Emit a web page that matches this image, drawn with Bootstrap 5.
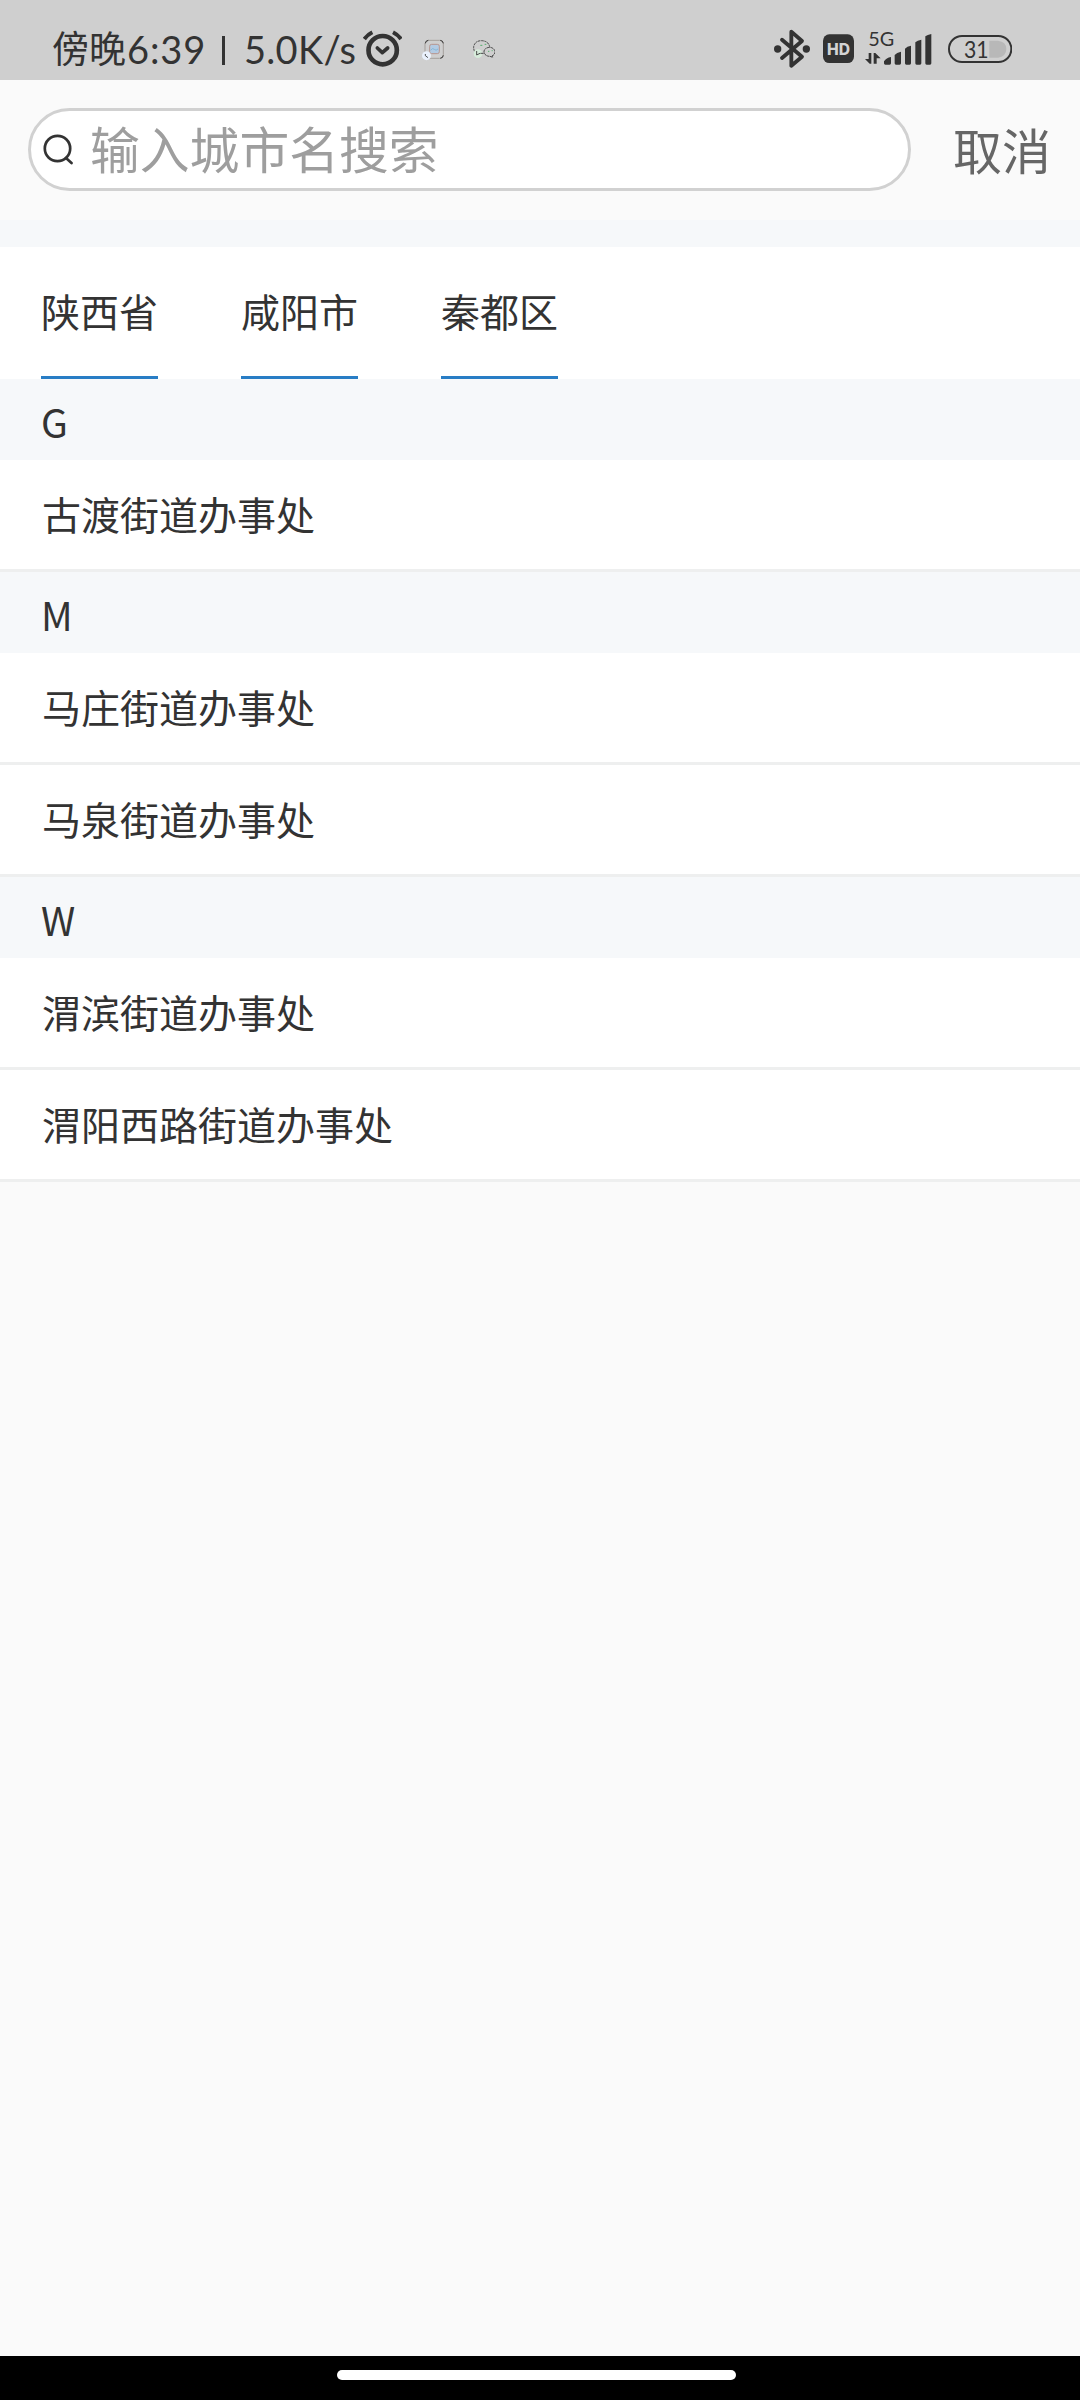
<!DOCTYPE html>
<html lang="zh-CN">
<head>
<meta charset="utf-8">
<meta name="viewport" content="width=device-width, initial-scale=1">
<title>选择城市</title>
<link rel="stylesheet" href="https://cdn.jsdelivr.net/npm/bootstrap@5.3.0/dist/css/bootstrap.min.css">
<style>
  body { font-family: Lato, "Noto Sans CJK SC", sans-serif; color: #333; background: #fafafa; font-size: 39px; line-height: 1; }
  .screen { height: 2400px; }
  .status { height: 80px; background: #cfcfcf; padding: 0 68px 0 52px; }
  .status svg { height: 70px; display: block; flex: none; margin-top: 10px; }
  .clock { font-size: 37px; width: 311px; height: 80px; line-height: 98px; white-space: nowrap; }
  .clock .cn { width: 75px; }
  .clock .tm { width: 79px; font-size: 38px; letter-spacing: .9px; }
  .clock .bar { width: 3px; height: 29px; background: #333; margin: 36px 19px 0 16px; }
  .clock .rate { font-size: 38px; letter-spacing: .3px; }
  .searchbar { height: 140px; padding: 28px 29px 29px 28px; }
  .search-box { width: 883px; height: 83px; border: 3px solid #d1d1d1; color: #9e9e9e; font-size: 49.8px; padding-left: 12px; }
  .search-box svg { margin-right: 17px; }
  .search-box span { padding-top: 2px; }
  .cancel { color: #666; font-size: 49px; padding-top: 4px; }
  .strip { height: 27px; background: #f6f8fa; }
  .crumbs { height: 132px; padding-left: 41px; gap: 83px; }
  .crumbs a { color: #333; border-bottom: 3px solid #287dc5; padding-top: 1px; }
  .letter { height: 81px; padding: 3px 0 0 41px; background: #f6f8fa; font-family: "Noto Sans CJK SC", sans-serif; }
  .place { height: 112px; padding: 2px 0 0 42px; border-bottom: 3px solid #eeefef; }
  .homebar { height: 44px; background: #000; padding-right: 7px; }
  .pill { width: 399px; height: 10px; margin-bottom: 6px; }
</style>
<script src="https://cdn.jsdelivr.net/npm/bootstrap@5.3.0/dist/js/bootstrap.bundle.min.js"></script>
</head>
<body>
<div class="screen d-flex flex-column">
  <header class="status d-flex justify-content-between">
    <div class="d-flex">
      <div class="clock d-flex"><span class="cn">傍晚</span><span class="tm">6:39</span><span class="bar"></span><span class="rate">5.0K/s</span></div>
      <svg width="39.33" viewBox="69 0 118 210" fill="none" stroke="#333" stroke-linecap="round" stroke-linejoin="round">
        <circle cx="128" cy="120.500" r="42.500" stroke-width="14"/>
        <path d="M112 114l15 14 16-14" stroke-width="11"/>
        <path d="M73 87Q83 74 97 67M159 67Q173 74 183 87" stroke-width="12" stroke-linecap="butt"/>
      </svg>
      <svg width="22.67" viewBox="245 0 68 210" style="margin-left:19.3px" fill="none">
        <rect x="254" y="91" width="55" height="54" rx="11" stroke="#a5a09c" stroke-width="3"/>
        <path d="M255 100q1-8 9-9M300 91q8 1 9 9M309 136q-1 8-9 9" stroke="#333" stroke-width="3"/>
        <rect x="268" y="103" width="29" height="28" rx="6" fill="#b3cbe3" stroke="#b8958d" stroke-width="3"/>
        <path d="M271 121q6-9 11-3t11-1" stroke="#83b6d8" stroke-width="3"/>
        <circle cx="258.500" cy="137" r="13.500" fill="#eaf1fc"/>
        <path d="M255 132v5l8 6" stroke="#333" stroke-width="2.500"/>
      </svg>
      <svg width="22.67" viewBox="398 0 68 210" style="margin-left:28.4px" fill="none" stroke="#333" stroke-width="2.600">
        <path d="M408 131Q399 122 400 110Q404 92 424 92Q444 93 448 110" stroke-dasharray="7 2"/>
        <circle cx="413" cy="131" r="13" fill="#d7ecdb" stroke="none"/>
        <path d="M409 123v12l10-5M420 130h10"/>
        <path d="M455 138Q465 133 464 124Q460 112 447 112Q431 114 431 126Q434 139 449 139l8 3z" stroke-dasharray="8 1.500"/>
        <path d="M420 106h6M433 103h5M443 124h4M454 122h3" stroke="#54ad6c" stroke-width="3"/>
      </svg>
    </div>
    <div class="d-flex">
      <svg width="36" viewBox="42 0 108 210" fill="none" stroke="#333" stroke-width="11.500" stroke-linecap="round" stroke-linejoin="round">
        <path d="M66 89L126 140 94 167V65L126 93 66 144"/>
        <circle cx="53" cy="117" r="11" fill="#333" stroke="none"/><circle cx="139" cy="117" r="11" fill="#333" stroke="none"/>
      </svg>
      <svg width="31" viewBox="188 0 93 210" style="margin-left:12.7px">
        <rect x="188" y="73" width="93" height="86" rx="19" fill="#333"/>
        <text x="234.500" y="134.500" font-family="Inter, sans-serif" font-weight="800" font-size="48" fill="#d4d4d4" text-anchor="middle" textLength="69" lengthAdjust="spacingAndGlyphs">HD</text>
      </svg>
      <svg width="66.67" viewBox="316 0 200 210" style="margin-left:11.6px" fill="#333">
        <text x="326" y="108" font-family="Lato, sans-serif" font-size="57" textLength="78" lengthAdjust="spacingAndGlyphs">5G</text>
        <path d="M327 129h8v32h-5l-14-14h11zM342 161v-32h5l16 16h-12v16z"/>
        <path d="M373 154q7-11 21-13v19q0 4-4 4h-13q-4 0-4-4zM405 135q6-8 19-10v35q0 4-4 4h-11q-4 0-4-4zM436 116q6-7 18-9v53q0 4-4 4h-10q-4 0-4-4zM467 97q6-6 18-8v71q0 4-4 4h-10q-4 0-4-4zM497 79q6-5 18-7v88q0 4-4 4h-10q-4 0-4-4z"/>
      </svg>
      <svg width="64.33" viewBox="563 0 193 210" style="margin-left:15.7px">
        <rect x="566" y="78" width="187" height="78" rx="39" fill="none" stroke="#333" stroke-width="6"/>
        <path d="M687 92h26q25 3 25 25t-25 26h-26z" fill="#b8b8b8"/>
        <text x="611" y="144" font-family="Lato, sans-serif" font-size="68" fill="#333" textLength="74" lengthAdjust="spacingAndGlyphs">31</text>
      </svg>
    </div>
  </header>

  <div class="searchbar d-flex justify-content-between align-items-center">
    <div class="search-box bg-white rounded-pill d-flex align-items-center">
      <svg width="30" height="31" viewBox="0 0 30 31" fill="none" stroke="#333" stroke-width="2.700" stroke-linecap="round"><circle cx="14.500" cy="14.500" r="12.700"/><path d="M23 24l5.500 5"/></svg>
      <span>输入城市名搜索</span>
    </div>
    <span class="cancel">取消</span>
  </div>
  <div class="strip"></div>

  <nav class="crumbs bg-white d-flex">
    <a class="d-flex align-items-center text-decoration-none" href="#">陕西省</a>
    <a class="d-flex align-items-center text-decoration-none" href="#">咸阳市</a>
    <a class="d-flex align-items-center text-decoration-none" href="#">秦都区</a>
  </nav>

  <main class="flex-grow-1">
    <div class="letter d-flex align-items-center">G</div>
    <div class="place bg-white d-flex align-items-center">古渡街道办事处</div>
    <div class="letter d-flex align-items-center">M</div>
    <div class="place bg-white d-flex align-items-center">马庄街道办事处</div>
    <div class="place bg-white d-flex align-items-center">马泉街道办事处</div>
    <div class="letter d-flex align-items-center">W</div>
    <div class="place bg-white d-flex align-items-center">渭滨街道办事处</div>
    <div class="place bg-white d-flex align-items-center">渭阳西路街道办事处</div>
  </main>

  <footer class="homebar d-flex justify-content-center align-items-center"><div class="pill bg-white rounded-pill"></div></footer>
</div>
</body>
</html>
